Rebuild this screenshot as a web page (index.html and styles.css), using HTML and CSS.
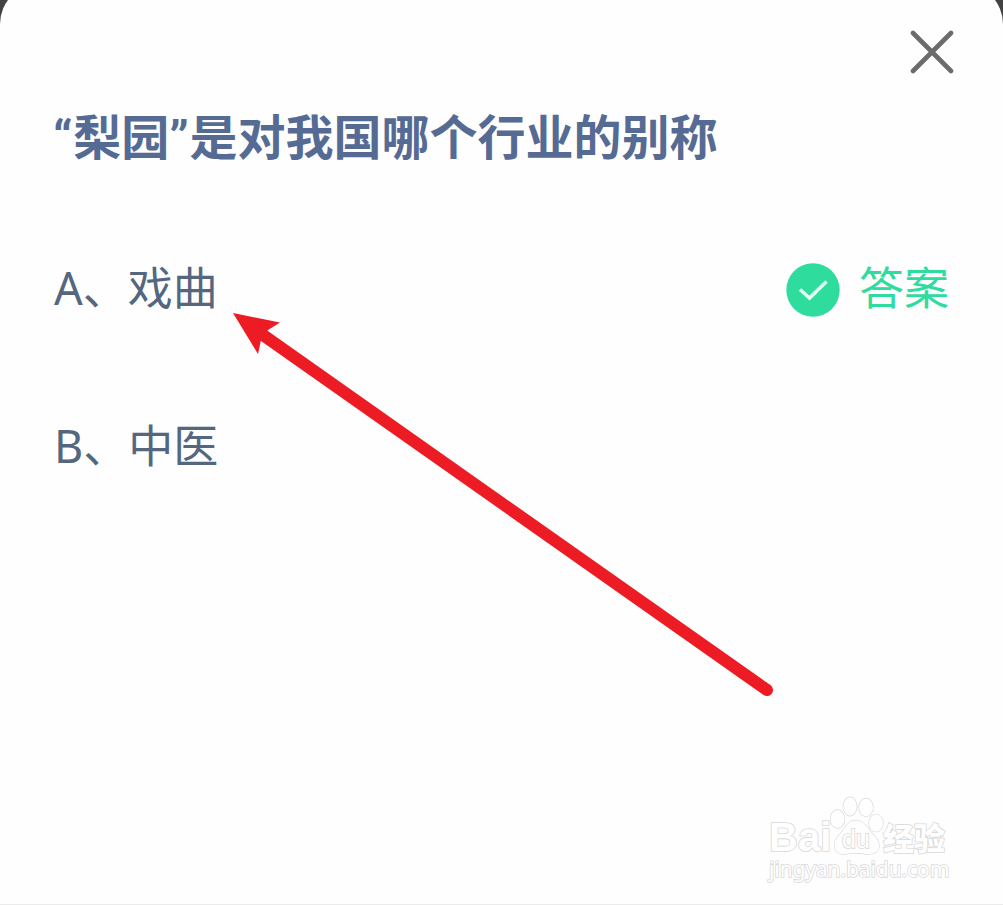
FILE: index.html
```html
<!DOCTYPE html>
<html lang="zh-CN">
  <head>
    <meta charset="UTF-8">
    <meta name="viewport" content="width=device-width, initial-scale=1.0">
    <link rel="stylesheet" href="styles.css">
    <title>答题</title>
  </head>
  <body>
    <main class="sheet">
      <div class="sheet-top">
        <button class="close" aria-label="关闭">
          <svg width="44" height="44" viewBox="0 0 44 44">
            <path d="M3 3L41 41M41 3L3 41"/>
          </svg>
        </button>
      </div>
      <h1 class="question"><span class="quote">“</span>梨园<span class="quote">”</span>是对我国哪个行业的别称</h1>
      <div class="options">
        <div class="option">
          <span class="label">A、戏曲</span>
          <div class="answer">
            <svg class="check" width="54" height="54" viewBox="0 0 54 54">
              <circle cx="27" cy="27" r="26.7"/>
              <path d="M14 26.5L23.5 35L40.5 18.5"/>
            </svg>
            <span>答案</span>
          </div>
        </div>
        <div class="option">
          <span class="label">B、中医</span>
        </div>
      </div>
      <footer class="watermark">
        <div class="brand">
          <span class="bai">Bai</span>
          <div class="paw">
            <svg width="54" height="62" viewBox="0 0 54 62">
              <ellipse cx="7.5" cy="24" rx="7" ry="9"/>
              <ellipse cx="20" cy="11.5" rx="6.7" ry="9.3"/>
              <ellipse cx="36" cy="12.5" rx="7" ry="9"/>
              <ellipse cx="46" cy="28" rx="7" ry="8.7"/>
              <path d="M26 25.5C33 25.5 37 31 40 36C44 41 50 45 49 52C48 58 43 59 38 59C32 59 30 58 26 58C22 58 18 59 13 59C8 59 4.500 56 4.500 50C4.500 43 10 40 14 34C17 29 20 25.500 26 25.500Z"/>
            </svg>
            <span class="du">du</span>
          </div>
          <span class="jingyan">经验</span>
        </div>
        <div class="site">jingyan.baidu.com</div>
      </footer>
      <svg class="arrow" width="540" height="384" viewBox="0 0 540 384">
        <path class="shaft" d="M30 22L534 377"/>
        <path class="head" d="M0 0L47 9.500L35 17L28 27L25 41Z"/>
      </svg>
    </main>
  </body>
</html>
```

FILE: styles.css
```css
body {
  margin: 0;
  height: 905px;
  overflow: hidden;
  display: flex;
  background-color: #424242;
  font-family: "Noto Sans", "Noto Sans CJK SC", sans-serif;
}

.sheet {
  position: relative;
  display: flex;
  flex-direction: column;
  box-sizing: border-box;
  width: 1003px;
  height: 921px;
  margin-top: -16px;
  padding: 46px 49px 0 53px;
  background-color: #fefefe;
  border-bottom: 1px solid #ebebeb;
  border-radius: 40px 40px 0 0;
}

.sheet-top {
  display: flex;
  justify-content: flex-end;
}

.close {
  display: flex;
  padding: 0;
  border: none;
  background: none;
  cursor: pointer;
}

.close path {
  fill: none;
  stroke: #6b6b6b;
  stroke-width: 4.6;
  stroke-linecap: round;
}

.question {
  margin: 25px 0 0;
  font-size: 48px;
  font-weight: 700;
  line-height: 76px;
  color: #566b93;
  white-space: nowrap;
}

.quote {
  font-family: Roboto, sans-serif;
  font-weight: 700;
  letter-spacing: 0.8px;
}

.options {
  display: flex;
  flex-direction: column;
  gap: 88px;
  margin-top: 76px;
}

.option {
  display: flex;
  justify-content: space-between;
  align-items: center;
  height: 70px;
  font-size: 45px;
  line-height: 70px;
  color: #54677f;
}

.label {
  padding-left: 1px;
}

.answer {
  display: flex;
  align-items: center;
  gap: 19px;
  padding-right: 5px;
  color: #2edc9d;
}

.answer span {
  line-height: 68px;
}

.check {
  margin-top: 3px;
}

.check circle {
  fill: #2edc9d;
}

.check path {
  fill: none;
  stroke: #e8fff5;
  stroke-width: 3.5;
}

.watermark {
  display: flex;
  flex-direction: column;
  margin: auto 0 22px 716px;
  color: #fff;
  -webkit-text-stroke: 1.6px #d8d8d8;
  paint-order: stroke;
}

.brand {
  display: flex;
  align-items: flex-end;
  height: 61px;
}

.bai {
  width: 61px;
  font: 700 40px/38px "Liberation Sans", sans-serif;
}

.paw {
  position: relative;
  width: 53px;
  height: 61px;
}

.paw ellipse,
.paw path {
  fill: #fefefe;
  stroke: #d8d8d8;
  stroke-width: 1.3;
}

.du {
  position: absolute;
  left: 12px;
  top: 28px;
  font: 400 25px/32px "Liberation Sans", sans-serif;
}

.jingyan {
  font: 900 31px/38px "Noto Sans CJK SC", sans-serif;
}

.site {
  font-size: 21px;
  line-height: 26px;
  letter-spacing: -0.1px;
}

/* pointer drawn over the first option */
.arrow {
  position: absolute;
  left: 233px;
  top: 329px;
}

.shaft {
  stroke: #ed1c24;
  stroke-width: 12;
  stroke-linecap: round;
}

.head {
  fill: #ed1c24;
}
```
